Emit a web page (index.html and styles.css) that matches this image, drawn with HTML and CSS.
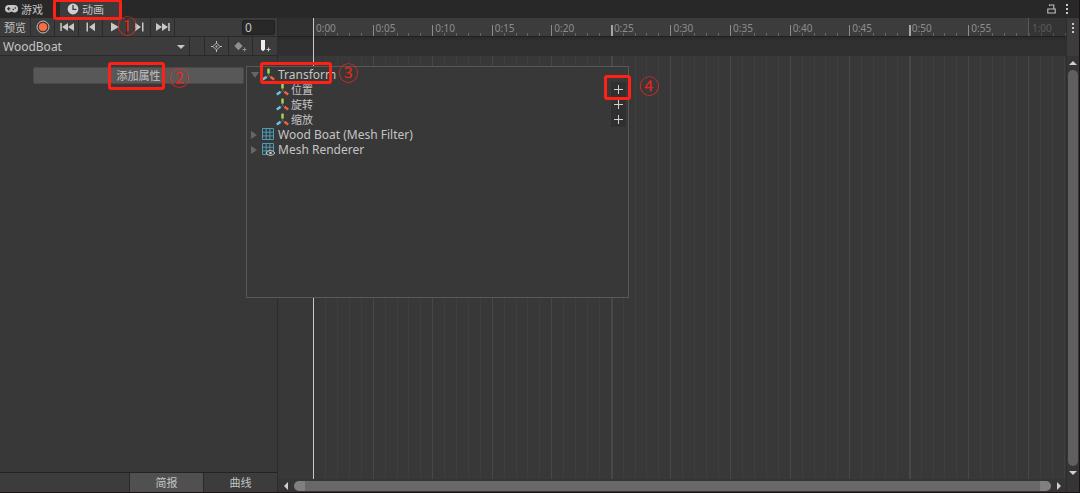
FILE: index.html
```html
<!DOCTYPE html>
<html lang="zh-CN">
<head>
  <meta charset="UTF-8">
  <meta name="viewport" content="width=device-width, initial-scale=1.0">
  <title>动画</title>
  <link rel="stylesheet" href="styles.css">
</head>
<body>
  <!-- Shared icons -->
  <svg class="defs" aria-hidden="true">
    <symbol id="axes" viewBox="0 0 13 13">
      <path d="M6.5.6v5" stroke="#9be04a" stroke-width="2.4"/>
      <path d="M4.6 8.800.8 11.400" stroke="#6cc4ee" stroke-width="2.4"/>
      <path d="M8.400 8.800l3.800 2.600" stroke="#f0653a" stroke-width="2.4"/>
      <path d="M6.5 6v1.500L5 8.600M6.5 7.500 8 8.600" stroke="#666" fill="none"/>
    </symbol>
    <symbol id="mesh" viewBox="0 0 13 13">
      <path d="M.5.5h11v11H.5zM4.2.5v11M7.9.5v11M.5 4.2h11M.5 7.9h11" stroke="#4d9cb8" fill="none"/>
    </symbol>
    <symbol id="dots" viewBox="0 0 4 12">
      <path d="M1 1h2v2H1zM1 5h2v2H1zM1 9h2v2H1z" fill="#c8c8c8"/>
    </symbol>
  </svg>

  <div class="window">
    <!-- Window tabs -->
    <header class="tabs">
      <button class="tab">
        <svg width="13" height="8" viewBox="0 0 13 8"><path d="M3.6 0h5.8a3.6 3.8 0 0 1 0 7.6C8 7.6 7.6 6.5 6.5 6.5S5 7.6 3.6 7.6a3.6 3.8 0 0 1 0-7.6z" fill="#c4c4c4"/><path d="M2 3.8h3.4M3.7 2.1v3.4" stroke="#282828" stroke-width="1.1"/><circle cx="8.3" cy="4.5" r=".8" fill="#282828"/><circle cx="10.2" cy="3" r=".8" fill="#282828"/></svg>
        游戏
      </button>
      <button class="tab active">
        <svg width="12" height="12" viewBox="0 0 12 12"><circle cx="6" cy="6" r="5.4" fill="#d0d0d0"/><path d="M6 2v4.3h3.4" stroke="#3c3c3c" stroke-width="1.3" fill="none"/></svg>
        动画
      </button>
      <div class="tab-tools">
        <button aria-label="Lock"><svg width="9" height="10" viewBox="0 0 9 10"><path d="M.8 5h7.4v4H.8zM2.500 2V1h4.300v4" stroke="#c0c0c0" stroke-width="1.1" fill="none"/></svg></button>
        <button aria-label="Menu"><svg width="4" height="12"><use href="#dots"/></svg></button>
      </div>
    </header>

    <main class="editor">
      <!-- Left side -->
      <section class="sidebar">
        <div class="bar playback">
          <button class="preview">预览</button>
          <button class="record" aria-label="Record"><svg width="14" height="14" viewBox="0 0 14 14"><circle cx="7" cy="7" r="6" fill="none" stroke="#bdbdbd"/><circle cx="7" cy="7" r="4.1" fill="#ff6b40"/></svg></button>
          <button aria-label="First key"><svg width="14" height="10" viewBox="0 0 14 10"><path d="M.3 1h1.5v8H.3zM8 1v8L2 5zM14 1v8L8 5z" fill="#c8c8c8"/></svg></button>
          <button aria-label="Previous key"><svg width="10" height="10" viewBox="0 0 10 10"><path d="M.5.5H2v9H.5zM9 .8v8.4L3 5z" fill="#c8c8c8"/></svg></button>
          <button aria-label="Play"><svg width="8" height="10" viewBox="0 0 8 10"><path d="M0 .5v9L8 5z" fill="#c8c8c8"/></svg></button>
          <button aria-label="Next key"><svg width="10" height="10" viewBox="0 0 10 10"><path d="M8 .5h1.5v9H8zM1 .8v8.4L7 5z" fill="#c8c8c8"/></svg></button>
          <button aria-label="Last key"><svg width="14" height="10" viewBox="0 0 14 10"><path d="M12.2 1h1.5v8h-1.5zM6 1v8l6-4zM0 1v8l6-4z" fill="#c8c8c8"/></svg></button>
          <input class="frame" type="text" value="0" aria-label="Frame">
        </div>
        <div class="bar clip">
          <div class="clip-picker">
            <select aria-label="Clip"><option>WoodBoat</option></select>
          </div>
          <div class="spacer"></div>
          <button class="key-tool" aria-label="Filter by selection"><svg width="11" height="11" viewBox="0 0 11 11"><path d="M5.5 2 9 5.5 5.5 9 2 5.5zM5.5 0v2M5.5 9v2M0 5.5h2M9 5.5h2" stroke="#bdbdbd" fill="none"/><circle cx="5.5" cy="5.5" r="1" fill="#bdbdbd"/></svg></button>
          <button class="key-tool" aria-label="Add keyframe"><svg width="13" height="11" viewBox="0 0 13 11"><path d="M4.5.7 8.6 5 4.5 9.3.4 5z" fill="#8f8f8f"/><path d="M8.5 8.5h4M10.5 6.5v4" stroke="#8f8f8f"/></svg></button>
          <button class="key-tool" aria-label="Add event"><svg width="11" height="12" viewBox="0 0 11 12"><path d="M1 0h4v9.5L3 11.2 1 9.5z" fill="#eee"/><path d="M6.5 9.5h4M8.5 7.5v4" stroke="#c8c8c8"/></svg></button>
        </div>
        <div class="properties">
          <button class="add-property">添加属性</button>
        </div>
        <div class="modes">
          <button class="mode selected">简报</button>
          <button class="mode">曲线</button>
        </div>
      </section>

      <!-- Timeline -->
      <section class="timeline">
        <div class="track ruler">
          <div class="lead"></div>
          <div class="unit">0:00</div>
          <div class="unit">0:05</div>
          <div class="unit">0:10</div>
          <div class="unit">0:15</div>
          <div class="unit">0:20</div>
          <div class="unit strong">0:25</div>
          <div class="unit">0:30</div>
          <div class="unit">0:35</div>
          <div class="unit">0:40</div>
          <div class="unit">0:45</div>
          <div class="unit strong">0:50</div>
          <div class="unit">0:55</div>
          <div class="unit rest">1:00</div>
        </div>
        <div class="events"></div>
        <div class="track grid">
          <div class="lead"></div>
          <div class="unit"></div>
          <div class="unit"></div>
          <div class="unit"></div>
          <div class="unit"></div>
          <div class="unit"></div>
          <div class="unit strong"></div>
          <div class="unit"></div>
          <div class="unit"></div>
          <div class="unit"></div>
          <div class="unit"></div>
          <div class="unit strong"></div>
          <div class="unit"></div>
          <div class="unit rest"></div>
        </div>
        <div class="playhead"></div>
        <div class="scroll-x">
          <span class="arrow left"></span>
          <div class="thumb"></div>
          <span class="arrow right"></span>
        </div>
      </section>

      <div class="scroll-y">
        <button class="menu" aria-label="Timeline menu"><svg width="4" height="12"><use href="#dots"/></svg></button>
        <span class="arrow up"></span>
        <div class="thumb"></div>
        <span class="arrow down"></span>
      </div>
    </main>

    <!-- Property popup -->
    <div class="popup">
      <ul class="tree">
        <li><span class="fold open"></span><svg class="icon"><use href="#axes"/></svg>Transform</li>
        <li class="child"><svg class="icon"><use href="#axes"/></svg>位置<button class="plus" aria-label="添加位置"></button></li>
        <li class="child"><svg class="icon"><use href="#axes"/></svg>旋转<button class="plus" aria-label="添加旋转"></button></li>
        <li class="child"><svg class="icon"><use href="#axes"/></svg>缩放<button class="plus" aria-label="添加缩放"></button></li>
        <li><span class="fold"></span><svg class="icon"><use href="#mesh"/></svg>Wood Boat (Mesh Filter)</li>
        <li><span class="fold"></span><svg class="icon"><use href="#mesh"/><path d="M4 10q4.500-5 9 0-4.500 5-9 0z" fill="#383838" stroke="#c8c8c8"/><circle cx="8.500" cy="10" r="1.300" fill="#c8c8c8"/></svg>Mesh Renderer</li>
      </ul>
    </div>

    <!-- Step marks -->
    <div class="mark mark-tab"></div>
    <div class="mark mark-add"></div>
    <div class="mark mark-transform"></div>
    <div class="mark mark-plus"></div>
    <span class="step step-1">①</span>
    <span class="step step-2">②</span>
    <span class="step step-3">③</span>
    <span class="step step-4">④</span>
  </div>
</body>
</html>
```

FILE: styles.css
```css
* {
  box-sizing: border-box;
}

body {
  margin: 0;
  background: #191516;
  color: #c4c4c4;
  font-family: "Noto Sans", "Noto Sans CJK SC", sans-serif;
  font-size: 12px;
  line-height: 15px;
}

button,
input,
select {
  margin: 0;
  padding: 0;
  border: 0;
  background: none;
  color: inherit;
  font: inherit;
}

svg {
  display: block;
  flex: none;
}

.defs {
  position: absolute;
  width: 0;
  height: 0;
}

.window {
  position: relative;
  display: flex;
  flex-direction: column;
  height: 100vh;
  padding: 0 1px 1px 0;
  overflow: hidden;
}

/* Window tabs */
.tabs {
  display: flex;
  flex: none;
  height: 18px;
  background: #282828;
}

.tab {
  display: flex;
  align-items: center;
  gap: 3px;
  width: 60px;
  padding-left: 5px;
  font-size: 11px;
}

.tab.active {
  background: #3c3c3c;
  padding-left: 7px;
}

.tab-tools {
  display: flex;
  align-items: center;
  gap: 9px;
  margin-left: auto;
  padding-right: 10px;
}

.editor {
  display: flex;
  flex: 1;
  min-height: 0;
  background: #383838;
}

/* Left side */
.sidebar {
  display: flex;
  flex-direction: column;
  flex: none;
  width: 278px;
  border-right: 1px solid #2c2c2c;
}

.bar {
  display: flex;
  flex: none;
  height: 19px;
  background: #3c3c3c;
  border-bottom: 1px solid #292929;
}

.bar button {
  display: flex;
  align-items: center;
  justify-content: center;
  width: 24px;
  border-right: 1px solid #2a2a2a;
}

.bar .preview {
  width: 31px;
  font-size: 11px;
}

.frame {
  width: 33px;
  height: 15px;
  margin: 2px 2px 0 auto;
  padding-left: 2px;
  background: #282828;
  border: 1px solid #202020;
  border-radius: 2px;
  line-height: 13px;
}

.clip-picker {
  position: relative;
  flex: 1;
  border-right: 1px solid #2a2a2a;
}

.clip-picker::after {
  content: "";
  position: absolute;
  top: 8px;
  right: 4px;
  border: 4px solid transparent;
  border-top-color: #c8c8c8;
  border-bottom: 0;
  pointer-events: none;
}

.clip-picker select {
  width: 100%;
  height: 18px;
  padding-left: 3px;
  appearance: none;
}

.spacer {
  width: 15px;
  border-right: 1px solid #2a2a2a;
}

.bar .key-tool:last-child {
  border-right: 0;
}

.properties {
  flex: 1;
  padding: 11px 33px;
}

.add-property {
  display: block;
  width: 211px;
  height: 17px;
  background: #585858;
  border: 1px solid #4a4a4a;
  border-radius: 2px;
  font-size: 11px;
  line-height: 15px;
}

.modes {
  display: flex;
  justify-content: flex-end;
  height: 20px;
  background: #3c3c3c;
  border-top: 1px solid #232323;
}

.mode {
  width: 74px;
  border-left: 1px solid #2a2a2a;
  font-size: 11px;
}

.mode.selected {
  background: #505050;
}

/* Timeline */
.timeline {
  position: relative;
  display: flex;
  flex-direction: column;
  flex: 1;
  min-width: 0;
}

.track {
  display: flex;
}

.lead {
  flex: none;
  width: 35px;
}

.unit {
  flex: 1;
  min-width: 0;
}

.unit.rest {
  flex: none;
  width: 38px;
}

.ruler {
  flex: none;
  height: 19px;
  background: #3c3c3c;
  border-bottom: 1px solid #202020;
  color: #8c8c8c;
  font-size: 10px;
  line-height: 20px;
}

.ruler .lead {
  background: #303030;
}

.ruler .unit {
  padding-left: 3px;
  background:
    linear-gradient(#8c8c8c, #8c8c8c) 0 100% / 1px 11px no-repeat,
    repeating-linear-gradient(to right, #666 0 1px, transparent 1px 20%) 0 100% / 100% 3px no-repeat;
}

.ruler .unit.strong {
  background:
    linear-gradient(#a6a6a6, #a6a6a6) 0 100% / 2px 11px no-repeat,
    repeating-linear-gradient(to right, #666 0 1px, transparent 1px 20%) 0 100% / 100% 3px no-repeat;
}

.ruler .unit.rest {
  background:
    repeating-linear-gradient(to right, #505050 0 1px, transparent 1px 12px) 0 100% / 100% 3px no-repeat,
    #343434;
  border-left: 1px solid #5a5a5a;
  color: #5c5c5c;
}

.events {
  flex: none;
  height: 19px;
  background: linear-gradient(#2b2b2b, #303030 5px);
}

.grid {
  flex: 1;
}

.grid .unit {
  background:
    linear-gradient(#484848, #484848) 0 0 / 1px 100% no-repeat,
    repeating-linear-gradient(to right, #3e3e3e 0 1px, transparent 1px 20%);
}

.grid .unit.strong {
  background:
    linear-gradient(#484848, #484848) 0 0 / 2px 100% no-repeat,
    repeating-linear-gradient(to right, #3e3e3e 0 1px, transparent 1px 20%);
}

.grid .unit.rest {
  background:
    linear-gradient(#484848, #484848) 0 0 / 1px 100% no-repeat,
    repeating-linear-gradient(to right, #3e3e3e 0 1px, transparent 1px 12px);
}

.playhead {
  position: absolute;
  top: 0;
  bottom: 13px;
  left: 35px;
  width: 1px;
  background: #c8c8c8;
}

/* Scroll bars */
.scroll-x {
  display: flex;
  flex: none;
  align-items: center;
  gap: 6px;
  height: 13px;
  padding: 0 5px 0 6px;
  background: #353535;
}

.scroll-x .thumb {
  flex: 1;
  height: 10px;
  background: #686868;
  border: solid #808080;
  border-width: 0 11px;
  border-radius: 5px;
}

.scroll-y {
  display: flex;
  flex-direction: column;
  align-items: center;
  flex: none;
  gap: 5px;
  width: 13px;
  padding-bottom: 17px;
  background: #353535;
  border-left: 1px solid #2c2c2c;
}

.scroll-y .menu {
  display: flex;
  align-items: center;
  justify-content: center;
  width: 100%;
  height: 38px;
  padding-bottom: 19px;
  background: #3c3c3c;
}

.scroll-y .thumb {
  flex: 1;
  width: 10px;
  background: #5f5f5f;
  border-radius: 5px;
}

.arrow {
  flex: none;
  border: 4px solid transparent;
}

.arrow.left {
  border-right-color: #d0d0d0;
  border-left: 0;
}

.arrow.right {
  border-left-color: #d0d0d0;
  border-right: 0;
}

.arrow.up {
  border-bottom-color: #d0d0d0;
  border-top: 0;
}

.arrow.down {
  border-top-color: #d0d0d0;
  border-bottom: 0;
}

/* Property popup */
.popup {
  position: absolute;
  top: 66px;
  left: 246px;
  width: 383px;
  height: 232px;
  background: #383838;
  border: 1px solid #585858;
}

.tree {
  margin: 0;
  padding: 0;
  list-style: none;
}

.tree li {
  display: flex;
  align-items: center;
  height: 15px;
  padding-left: 4px;
}

.tree .child {
  padding-left: 29px;
  font-size: 11px;
}

.icon {
  width: 13px;
  height: 13px;
  margin-right: 3px;
}

.child .icon {
  margin-right: 2px;
}

.fold {
  width: 11px;
}

.fold::before {
  content: "";
  display: block;
  width: 0;
  border: 4px solid transparent;
  border-left: 6px solid #666;
  border-right: 0;
}

.fold.open::before {
  border: 4px solid transparent;
  border-top: 6px solid #666;
  border-bottom: 0;
}

.plus {
  width: 15px;
  height: 15px;
  margin: 0 2px 0 auto;
  background:
    linear-gradient(#d0d0d0, #d0d0d0) 50% 50% / 9px 1px no-repeat,
    linear-gradient(#d0d0d0, #d0d0d0) 50% 50% / 1px 9px no-repeat,
    #303030;
}

/* Step marks */
.mark {
  position: absolute;
  border: 3px solid #ff2116;
  border-radius: 3px;
  pointer-events: none;
}

.mark-tab {
  top: -1px;
  left: 53px;
  width: 69px;
  height: 21px;
}

.mark-add {
  top: 62px;
  left: 108px;
  width: 57px;
  height: 28px;
}

.mark-transform {
  top: 62px;
  left: 260px;
  width: 72px;
  height: 22px;
}

.mark-plus {
  top: 75px;
  left: 604px;
  width: 27px;
  height: 25px;
}

.step {
  position: absolute;
  color: #e8241a;
  font-family: "Noto Sans CJK SC", sans-serif;
  font-size: 20px;
  line-height: 20px;
}

.step-1 {
  top: 16px;
  left: 117px;
}

.step-2 {
  top: 68px;
  left: 169px;
}

.step-3 {
  top: 63px;
  left: 338px;
}

.step-4 {
  top: 76px;
  left: 639px;
}
```
